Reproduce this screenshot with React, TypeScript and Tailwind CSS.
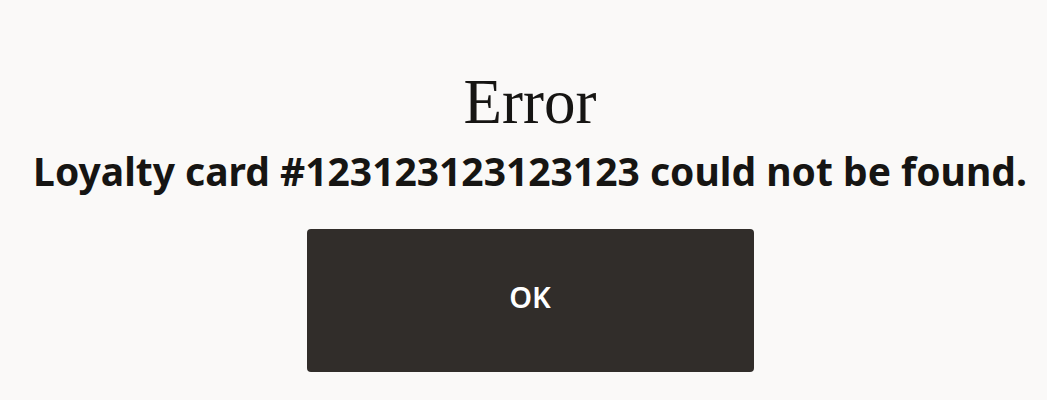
export default function App() {
  return (
    <div className="min-h-screen w-full bg-[#faf9f8] flex flex-col items-center pt-[67px] pl-[13px]">
      <h1 className="font-['Liberation_Serif',serif] text-[63px] leading-[70px] text-[#161513]">
        Error
      </h1>
      <p className="mt-[12px] font-['Noto_Sans',sans-serif] font-bold text-[39px] leading-[44px] text-[#161513] whitespace-nowrap">
        Loyalty card #123123123123123 could not be found.
      </p>
      <button className="mt-[36px] w-[447px] h-[143px] pb-[8px] rounded-[4px] bg-[#312d2a] text-white font-['Noto_Sans',sans-serif] font-semibold text-[29px]">
        OK
      </button>
    </div>
  );
}
